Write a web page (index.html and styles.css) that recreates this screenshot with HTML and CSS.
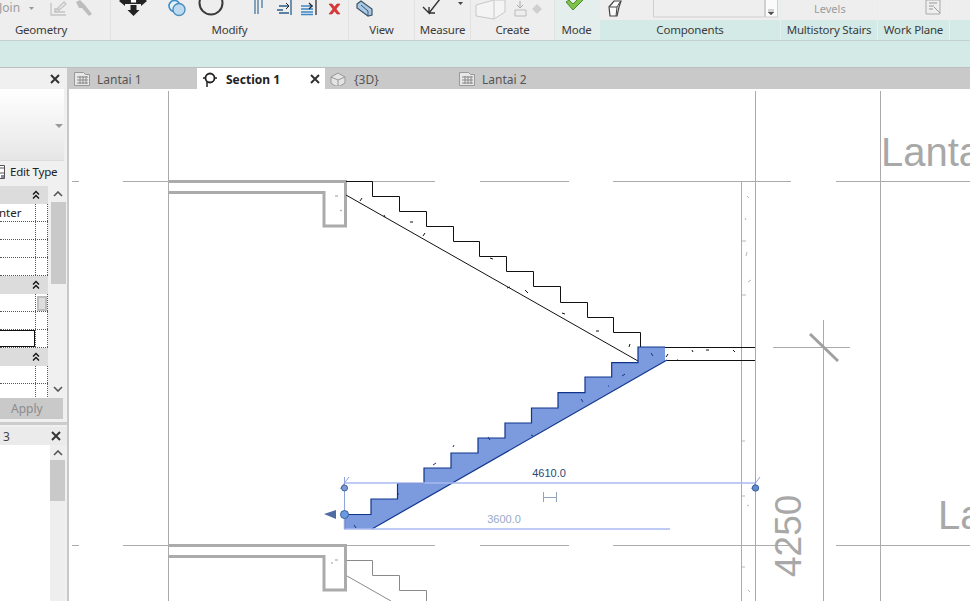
FILE: index.html
```html
<!DOCTYPE html>
<html lang="en">
<head>
<meta charset="utf-8">
<title>Section 1</title>
<link rel="stylesheet" href="styles.css">
</head>
<body>
<div class="app">
  <header class="ribbon">
    <section class="panel w-geometry">
      <svg class="tools" viewBox="0 0 110 20" width="110" height="20">
        <text x="-1" y="12" class="gray-text">Join</text>
        <path d="M29 7h5l-2.500 3z" fill="#999"/>
        <path d="M51 3v12h15M54 12h11M54 9h5M55 11l9-9 2 2-9 8z" fill="none" stroke="#c4c4c4" stroke-width="1.300"/>
        <path d="M76 2l4-2 5 5 7 9-3 2-7-8-3 0z" fill="#bdbdbd"/>
      </svg>
      <div class="label pad-geometry">Geometry</div>
    </section>
    <section class="panel w-modify">
      <svg class="tools" viewBox="111 0 237 20" width="237" height="20">
        <path d="M119 1l6-5v10zM147 1l-6-5v10z" fill="#222"/>
        <path d="M125-1h16v5h-16z" fill="#222"/>
        <path d="M130.500-2h6V3h-6z" fill="#fff" stroke="#333"/>
        <path d="M130.500 5h6v5h3l-6 6-6-6h3z" fill="#222"/>
        <circle cx="174.500" cy="6" r="5.500" fill="#e4f0fa" stroke="#3f8fc9" stroke-width="1.600"/>
        <circle cx="179" cy="9.500" r="6" fill="#bcd9ef" stroke="#4d8fbd" stroke-width="1.400"/>
        <circle cx="211" cy="3" r="11.500" fill="none" stroke="#3a3a3a" stroke-width="2"/>
        <path d="M255-2v16M258-2v16M262-2v10" fill="none" stroke="#3c6f98" stroke-width="1.200"/>
        <path d="M277 10h6M279 13h10M279 6h9M291-1v16" fill="none" stroke="#2b5d8c" stroke-width="1.300"/>
        <path d="M286 3l3 3-3 3" fill="none" stroke="#222"/>
        <path d="M301 6h12M301 9h12M301 12h12M301 14.500h12" fill="none" stroke="#3f86c4" stroke-width="1.300"/>
        <path d="M316-1v16M309 3l3 3-3 3" fill="none" stroke="#222" stroke-width="1.200"/>
        <path d="M329 4l3 0 2.500 3 2.500-3 3 0-4 5 4 5h-3l-2.500-3-2.500 3h-3l4-5z" fill="#e03636" stroke="#b52a2a" stroke-width=".6"/>
      </svg>
      <div class="label">Modify</div>
    </section>
    <section class="panel w-view">
      <svg class="tools" viewBox="349 0 65 20" width="65" height="20">
        <path d="M357 4l4-3 11 8v6l-4 1-11-8z" fill="#a9c9e4" stroke="#3b5569" stroke-width="1.200"/>
        <path d="M361 5l7 6v5" fill="none" stroke="#3b5569"/>
      </svg>
      <div class="label">View</div>
    </section>
    <section class="panel w-measure">
      <svg class="tools" viewBox="415 0 55 20" width="55" height="20">
        <path d="M423 7l7 7M440-1l-11 14M429 13v-6M429 13h6" fill="none" stroke="#333" stroke-width="1.400"/>
        <path d="M458 2h5l-2.500 3z" fill="#444"/>
      </svg>
      <div class="label">Measure</div>
    </section>
    <section class="panel w-create">
      <svg class="tools" viewBox="471 0 84 20" width="84" height="20">
        <path d="M476 5l18-5h11v12l-11 7-18-3z" fill="#f4f4f4" stroke="#c8c8c8"/>
        <path d="M494 0v19" stroke="#c8c8c8"/>
        <path d="M515 10h11v6h-11z" fill="none" stroke="#bbb"/>
        <path d="M520 1v7M517 5l3 3 3-3" fill="none" stroke="#aaa"/>
        <path d="M537 4l5 5-5 5-5-5z" fill="#cfcfcf"/>
      </svg>
      <div class="label">Create</div>
    </section>
    <section class="panel w-mode">
      <svg class="tools" viewBox="555 0 43 20" width="43" height="20">
        <path d="M566 2l3-2 4 4 7-7 3 3-10 10z" fill="#7fc14b" stroke="#4c8a2b" stroke-width="1"/>
      </svg>
      <div class="label">Mode</div>
    </section>
    <section class="panel active w-components">
      <svg class="tools" viewBox="600 0 180 20" width="180" height="20">
        <path d="M609 7l5-6h7l-2 6-2 9h-7z" fill="#fafafa" stroke="#444" stroke-width="1.200"/>
        <path d="M610 7h7l-1 9M617 7l3-5" fill="none" stroke="#444"/>
        <path d="M653.500-2h111v19h-111z" fill="#eee" stroke="#cfcfcf"/>
        <path d="M765.500-2h12v19h-12z" fill="#fbfbfb" stroke="#cfcfcf"/>
        <path d="M768 10h6M768 12h6l-3 3z" fill="#555" stroke="#555" stroke-width=".5"/>
      </svg>
      <div class="label">Components</div>
    </section>
    <section class="panel active w-multi">
      <svg class="tools" viewBox="781 0 96 20" width="96" height="20">
        <text x="814" y="13" class="gray-text small">Levels</text>
      </svg>
      <div class="label">Multistory Stairs</div>
    </section>
    <section class="panel active w-plane">
      <svg class="tools" viewBox="878 0 72 20" width="72" height="20">
        <path d="M926 0h14v14h-14z" fill="#eee" stroke="#aaa"/>
        <path d="M929 3h8M929 6h5M929 9h4M934 7l6 6" fill="none" stroke="#999"/>
      </svg>
      <div class="label">Work Plane</div>
    </section>
    <section class="panel active w-rest"></section>
  </header>
  <div class="options"></div>
  <div class="tabbar">
    <div class="tab-side">
      <svg class="x" viewBox="0 0 10 10" width="10" height="10"><path d="M1 1l8 8M9 1l-8 8"/></svg>
    </div>
    <div class="tab w-lantai1">
      <svg class="tab-icon" viewBox="0 0 16 14" width="16" height="14"><path d="M.5 .5h9l2 2h4v11H.5z" fill="#e8e8e8" stroke="#999"/><path d="M3 5h11M3 8h11M3 11h11M6 4v8M9 4v8M12 4v8" stroke="#888"/></svg>
      <span>Lantai 1</span>
    </div>
    <div class="tab current">
      <svg class="tab-icon" viewBox="0 0 14 16" width="14" height="16"><circle cx="7" cy="7" r="4.500" fill="#fff" stroke="#222" stroke-width="1.800"/><path d="M2 7h-2M12 7h2M4 11v5" stroke="#222" stroke-width="1.500"/></svg>
      <span class="tab-name">Section 1</span>
      <svg class="x tab-x" viewBox="0 0 10 10" width="10" height="10"><path d="M1 1l8 8M9 1l-8 8"/></svg>
    </div>
    <div class="tab w-3d">
      <svg class="tab-icon" viewBox="0 0 16 14" width="16" height="14"><path d="M1 5l7-4 7 4v6l-5 3H5l-4-3z" fill="#e4e4e4" stroke="#999"/><path d="M1 5l7 3 7-3M8 8v6" fill="none" stroke="#999"/></svg>
      <span>{3D}</span>
    </div>
    <div class="tab w-lantai2">
      <svg class="tab-icon" viewBox="0 0 16 14" width="16" height="14"><path d="M.5 .5h9l2 2h4v11H.5z" fill="#e8e8e8" stroke="#999"/><path d="M3 5h11M3 8h11M3 11h11M6 4v8M9 4v8M12 4v8" stroke="#888"/></svg>
      <span>Lantai 2</span>
    </div>
  </div>
  <main class="workspace">
    <aside class="side">
      <div class="type-box"><span class="caret"></span></div>
      <div class="edit-row">
        <svg viewBox="0 0 6 14" width="6" height="14"><path d="M-3 .5h7.500v13H-3z" fill="#fff" stroke="#555"/><path d="M-1 3h5M0 8h4" stroke="#555"/><path d="M1 10h3v3H1z" fill="#88a"/></svg>
        <span>Edit Type</span>
      </div>
      <div class="props">
        <div class="grid">
          <div class="group"><svg class="chev" viewBox="0 0 8 10" width="8" height="10"><path d="M1 4.500l3-3 3 3M1 8.500l3-3 3 3"/></svg></div>
          <div class="row"><span class="val">nter</span></div>
          <div class="row"></div>
          <div class="row"></div>
          <div class="row"></div>
          <div class="group"><svg class="chev" viewBox="0 0 8 10" width="8" height="10"><path d="M1 4.500l3-3 3 3M1 8.500l3-3 3 3"/></svg></div>
          <div class="row"><span class="chk"></span></div>
          <div class="row"></div>
          <div class="row"><span class="selected"></span></div>
          <div class="group"><svg class="chev" viewBox="0 0 8 10" width="8" height="10"><path d="M1 4.500l3-3 3 3M1 8.500l3-3 3 3"/></svg></div>
          <div class="row"></div>
          <div class="row"></div>
        </div>
        <div class="scroll">
          <svg viewBox="0 0 10 6" width="10" height="6"><path d="M1 5l4-4 4 4" fill="none" stroke="#555" stroke-width="1.600"/></svg>
          <div class="thumb"></div>
          <svg class="down" viewBox="0 0 10 6" width="10" height="6"><path d="M1 1l4 4 4-4" fill="none" stroke="#555" stroke-width="1.600"/></svg>
        </div>
      </div>
      <div class="apply">Apply</div>
      <div class="split"></div>
      <div class="browser-head">
        <span>3</span>
        <svg class="x" viewBox="0 0 10 10" width="10" height="10"><path d="M1 1l8 8M9 1l-8 8"/></svg>
      </div>
      <div class="browser">
        <div class="tree"></div>
        <div class="scroll2">
          <svg viewBox="0 0 10 6" width="10" height="6"><path d="M1 5l4-4 4 4" fill="none" stroke="#555" stroke-width="1.600"/></svg>
          <div class="thumb2"></div>
        </div>
      </div>
    </aside>
    <div class="canvas">
      <svg class="drawing" viewBox="69 89 901 512" width="901" height="512">
        <g stroke="#ababab" stroke-width="1" fill="none">
          <path d="M168.500 91V601M755.500 91V601M880.500 91V601M823.500 320V601M741.500 182V601"/>
          <path d="M773 347.500H850"/>
          <path d="M810 334l28 27" stroke="#a0a0a0" stroke-width="3"/>
          <path d="M72 181.500H79M123 181.500H435M480 181.500H569M613 181.500H791M836 181.500H970"/>
          <path d="M72 545.500H79M123 545.500H435M480 545.500H569M613 545.500H791M836 545.500H970"/>
          <path d="M742 241h4M742 295h4M742 441h3M742 496h3M742 567h3M747 196l2 2M745 218l1 2M746 256l1-4M751 280l-3 2M747 506l2-1M748 590l2 2" stroke="#b5b5b5"/>
        </g>
        <g stroke="#ababab" stroke-width="3" fill="none">
          <path d="M169 181.500H345.500V226H324V192.500H169"/>
          <path d="M169 545.500H345.500V590H324V556.500H169"/>
        </g>
        <path d="M335 196h3M342 211l-2-1M335 560h3M331 563h2" fill="none" stroke="#999"/>
        <path d="M346.500 560.500H372.500V575.500H399.500V590.500H426.500V601M347 576L391 601" fill="none" stroke="#8a8a8a"/>
        <path d="M346 181.500H372.500V196.500H399.500V211.500H426.500V226.500H453.500V241.500H479.500V256.500H506.500V271.500H533.500V286.500H560.500V302.500H587.500V317.500H613.500V332.500H640.500V347.500H755M667 360.500H755" fill="none" stroke="#111" stroke-width="1"/>
        <path d="M346 195L638 361" fill="none" stroke="#111"/>
        <path d="M360 201l2-3M384 215l1 2M410 222h3M423 236l2-3M490 258l3 1M507 288l3-1M525 290l3 3M562 313l3 1M596 331h3M629 347l1-3M692 350l1 2M706 350h3M733 350l2 2M666 357l2-3M677 360h1" fill="none" stroke="#111"/>
        <path d="M344.500 514.500H371V499H397.500V483.500H424V468H451V453H478V438H505V423H531.500V408H558V392.700H585V377H611.700V362.600H638V347H665V361L372 529H344.500Z" fill="#7c9bdf"/>
        <path d="M344.500 529V514.500H371V499H397.500V483.500H424V468H451V453H478V438H505V423H531.500V408H558V392.700H585V377H611.700V362.600H638V347H665" fill="none" stroke="#10348c" stroke-width="1.200"/>
        <path d="M372 529L667 360" fill="none" stroke="#10348c" stroke-width="1.200"/>
        <path d="M354 525l2 3M397 497h1M398 493v2M433 465l3-2M453 447l1-2M490 440l-2-3M531 435l2 1M581 399l2 3M608 386h1M622 376l3-2M651 353l2 3" fill="none" stroke="#10348c"/>
        <g stroke="#a9baf0" fill="none">
          <path d="M344 483H755" stroke-width="1.500"/>
          <path d="M344 529H670" stroke-width="1.500"/>
          <path d="M344.500 477V529M755.500 477V488M340 489l9-12M751 489l9-12" stroke="#8fa5d8"/>
        </g>
        <path d="M543.500 492v10M556.500 492v10M544 497.500h12" fill="none" stroke="#93a3bf"/>
        <path d="M324 514l12-4v9z" fill="#4f6ba3"/>
        <circle cx="344.500" cy="488" r="3" fill="#7c9ccf" stroke="#3d5f9c"/>
        <circle cx="755.500" cy="488" r="3.200" fill="#5f8ccc" stroke="#3d5f9c"/>
        <circle cx="344.500" cy="514.500" r="4" fill="#6a9be0" stroke="#3d5f9c"/>
        <text x="549" y="477" text-anchor="middle" class="dim">4610.0</text>
        <text x="504" y="523" text-anchor="middle" class="dim light">3600.0</text>
        <text x="881" y="166" class="big">Lanta</text>
        <text x="938" y="529" class="big">La</text>
        <text transform="translate(801 577) rotate(-90)" class="big num">4250</text>
      </svg>
    </div>
  </main>
</div>
</body>
</html>
```
FILE: styles.css
```css
* { box-sizing: border-box; }
html, body { margin: 0; height: 100%; overflow: hidden; background: #fff; }
body { font-family: "Noto Sans", "Open Sans", sans-serif; font-size: 12px; color: #333; }
.app { width: 970px; height: 601px; display: flex; flex-direction: column; overflow: hidden; }

.ribbon { height: 41px; display: flex; background: #eeeeee; border-bottom: 1px solid #c3d2d0; flex: none; }
.panel { display: flex; flex-direction: column; border-right: 1px solid #e2e2e2; flex: none; }
.tools { display: block; flex: none; }
.label { height: 20px; line-height: 19px; text-align: center; white-space: nowrap; color: #3b3b3b; font-size: 11.500px; letter-spacing: -.2px; }
.pad-geometry { padding-right: 28px; }
.active { border-right: 1px solid #e6efee; background: linear-gradient(#eeeeee 20px, #d3eae7 20px); }
.w-geometry { width: 111px; }
.w-modify { width: 238px; }
.w-view { width: 66px; }
.w-measure { width: 56px; }
.w-create { width: 84px; }
.w-mode { width: 45px; padding-right: 2px; background: #e4eeed; border-right: 0; }
.w-components { width: 181px; }
.w-multi { width: 97px; }
.w-plane { width: 72px; }
.w-rest { flex: 1; border-right: 0; }
.gray-text { font-size: 12px; fill: #9c9c9c; }
.small { font-size: 11px; }

.options { height: 27px; flex: none; background: #d3eae7; border-bottom: 1px solid #bdbdbd; }

.tabbar { height: 21px; flex: none; display: flex; background: #c9c9c9; }
.tab-side { width: 69px; background: #f0f0f0; display: flex; align-items: center; justify-content: flex-end; padding-right: 7px; border-right: 2px solid #c9c9c9; }
.x { fill: none; stroke: #333; stroke-width: 2; flex: none; }
.tab { display: flex; align-items: center; gap: 7px; width: 128px; padding-top: 1px; color: #555; }
.tab.current { background: #fff; color: #222; gap: 9px; padding-left: 6px; margin-left: 1px; }
.tab-name { font-weight: 700; }
.tab-x { margin-left: auto; margin-right: 5px; }
.w-lantai1 { padding-left: 5px; width: 127px; }
.w-3d { gap: 8px; padding-left: 5px; }
.w-lantai2 { gap: 7px; padding-left: 6px; }
.tab-icon { flex: none; }

.workspace { flex: 1; display: flex; min-height: 0; }
.side { width: 69px; flex: none; background: #f0f0f0; border-right: 2px solid #c8c8c8; display: flex; flex-direction: column; }
.type-box { height: 72px; flex: none; margin-right: 3px; background: linear-gradient(#ffffff, #e6e6e6); position: relative; border-bottom: 1px solid #dcdcdc; }
.caret { position: absolute; right: 1px; top: 35px; border: 4px solid transparent; border-top: 4px solid #999; border-bottom: 0; }
.edit-row { height: 25px; flex: none; display: flex; align-items: center; gap: 4px; padding-bottom: 4px; color: #222; font-size: 11.500px; letter-spacing: -.2px; }
.props { height: 212px; flex: none; display: flex; }
.grid { width: 48px; flex: none; background: #fff; overflow: hidden; }
.group { height: 18px; background: #dcdcdc; display: flex; justify-content: flex-end; align-items: center; padding-right: 8px; }
.chev { fill: none; stroke: #111; stroke-width: 1.300; flex: none; }
.row { height: 18px; border-bottom: 1px dotted #555; position: relative; font-size: 11.500px; line-height: 17px; overflow: hidden; }
.row::after { content: ""; position: absolute; left: 35px; top: 0; bottom: 0; border-left: 1px dotted #555; }
.row::before { content: ""; position: absolute; right: 0; top: 0; bottom: 0; border-right: 1px dotted #555; }
.val { color: #222; display: block; margin-left: -1px; }
.chk { position: absolute; left: 37px; top: 2px; width: 10px; height: 15px; background: #ddd; border: 2px solid #bdbdbd; }
.selected { position: absolute; left: -2px; top: 0; width: 37px; height: 17px; border: 1px solid #111; background: #fff; }
.scroll { width: 16px; margin-left: 2px; display: flex; flex-direction: column; align-items: center; padding-top: 5px; }
.thumb { width: 15px; height: 82px; margin-top: 5px; background: #c9c9c9; }
.down { margin-top: auto; margin-bottom: 6px; }
.apply { height: 21px; width: 63px; flex: none; background: #c9c9c9; color: #8c8c8c; line-height: 21px; font-size: 12px; padding-left: 11px; }
.split { height: 8px; flex: none; background-image: linear-gradient(#f0f0f0 3px, #cccccc 3px, #cccccc 6px, #f0f0f0 6px); }
.browser-head { height: 18px; flex: none; background: #ebebeb; display: flex; align-items: center; justify-content: space-between; padding-left: 3px; padding-right: 6px; color: #444; }
.browser { flex: 1; display: flex; min-height: 0; }
.tree { width: 50px; flex: none; background: #fff; }
.scroll2 { width: 15px; background: #eeeeee; display: flex; flex-direction: column; align-items: center; padding-top: 5px; }
.thumb2 { width: 15px; height: 41px; margin-top: 4px; background: #c9c9c9; }

.canvas { flex: 1; background: #fff; min-width: 0; }
.drawing { display: block; }
.dim { font-family: "Liberation Sans", sans-serif; font-size: 11px; fill: #234a78; }
.light { fill: #9aa9c5; }
.big { font-family: "Liberation Sans", sans-serif; font-size: 40px; fill: #a8a8a8; }
.num { font-size: 37px; }
```
